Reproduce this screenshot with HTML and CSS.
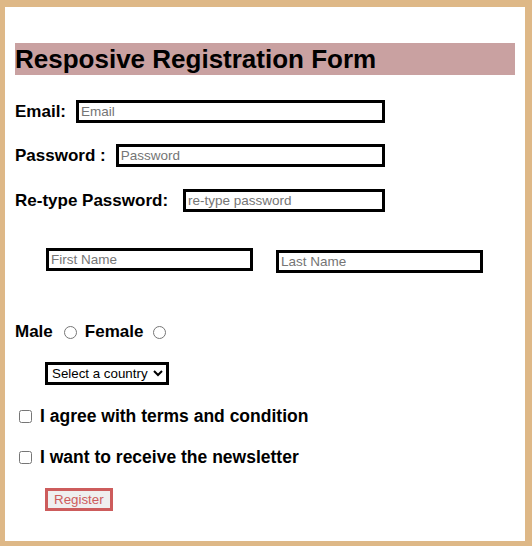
FILE: index.html
```html
<!doctype html>
<html lang="en">
<head>
    <meta charset="utf-8">
    <title>Registration Form</title>
    <link rel="stylesheet" href="styles.css">
</head>
<body>
    <form class="reg-form">
        <h1>Resposive Registration Form</h1>

        <div class="field field-email">
            <label for="email">Email:</label>
            <input type="text" id="email" placeholder="Email">
        </div>

        <div class="field field-pass">
            <label for="pass">Password :</label>
            <input type="password" id="pass" placeholder="Password">
        </div>

        <div class="field field-repass">
            <label for="repass">Re-type Password:</label>
            <input type="password" id="repass" placeholder="re-type password">
        </div>

        <div class="names">
            <input type="text" class="first" placeholder="First Name">
            <input type="text" class="last" placeholder="Last Name">
        </div>

        <div class="gender">
            <label for="male">Male</label>
            <input type="radio" name="gender" id="male">
            <label for="female">Female</label>
            <input type="radio" name="gender" id="female">
        </div>

        <div class="country">
            <select>
                <option>Select a country</option>
                <option>India</option>
                <option>USA</option>
            </select>
        </div>

        <div class="check check-terms">
            <input type="checkbox" id="terms">
            <label for="terms">I agree with terms and condition</label>
        </div>

        <div class="check check-news">
            <input type="checkbox" id="news">
            <label for="news">I want to receive the newsletter</label>
        </div>

        <div class="submit">
            <button type="button" class="btn-register">Register</button>
        </div>
    </form>
</body>
</html>
```

FILE: styles.css
```css
html {
    background: #deb887;
}

body {
    margin: 7px 7px 5px 5px;
    background: #fff;
    font-family: "Liberation Sans", Arial, sans-serif;
    color: #000;
    min-height: 534px;
    box-sizing: border-box;
    padding: 36px 10px 0 10px;
}

.reg-form {
    display: flex;
    flex-direction: column;
}

h1 {
    margin: 0;
    background: #c9a1a1;
    font-size: 26px;
    line-height: 32px;
    height: 32px;
    font-weight: bold;
}

label {
    font-size: 17px;
    font-weight: bold;
}

input[type="text"],
input[type="password"] {
    font-family: "Liberation Sans", Arial, sans-serif;
    font-size: 13.5px;
    border: 3px solid #000;
    padding: 1px 2px;
    margin: 0;
    border-radius: 0;
    outline: 0;
}

.field {
    display: flex;
    align-items: center;
    width: 370px;
}

.field input {
    flex: 1;
    min-width: 0;
}

.field-email  { margin-top: 25px; }
.field-pass   { margin-top: 21px; }
.field-repass { margin-top: 22px; }

.field-email input  { margin-left: 10px; }
.field-pass input   { margin-left: 10px; }
.field-repass input { margin-left: 15px; }

.names {
    display: flex;
    align-items: flex-start;
    gap: 23px;
    margin: 36px 0 0 31px;
}

.names input {
    width: 197px;
}

.names .last {
    margin-top: 2px;
}

.gender {
    display: flex;
    align-items: center;
    margin-top: 48px;
    height: 22px;
}

.gender input {
    margin: 0 8px 0 11px;
    width: 13px;
    height: 13px;
}

.gender input:last-child {
    margin-left: 10px;
}

.country {
    margin: 19px 0 0 30px;
}

.country select {
    font-family: "Liberation Sans", Arial, sans-serif;
    font-size: 13.33px;
    border: 3px solid #000;
    border-radius: 0;
    height: 23px;
    width: 124px;
    padding: 0;
    background: #fff;
    color: #000;
}

.check {
    display: flex;
    align-items: center;
    height: 22px;
}

.check input {
    margin: 0 8px 0 4px;
    width: 13px;
    height: 13px;
}

.check label {
    font-size: 17.5px;
}

.check-terms { margin-top: 20px; }
.check-news  { margin-top: 19px; }

.submit {
    margin: 20px 0 0 30px;
}

.btn-register {
    font-family: "Liberation Sans", Arial, sans-serif;
    font-size: 13.33px;
    color: #cd5c5c;
    background: #efefef;
    border: 3px solid #cd5c5c;
    border-radius: 0;
    padding: 1px 6px;
    height: 23px;
}
```
